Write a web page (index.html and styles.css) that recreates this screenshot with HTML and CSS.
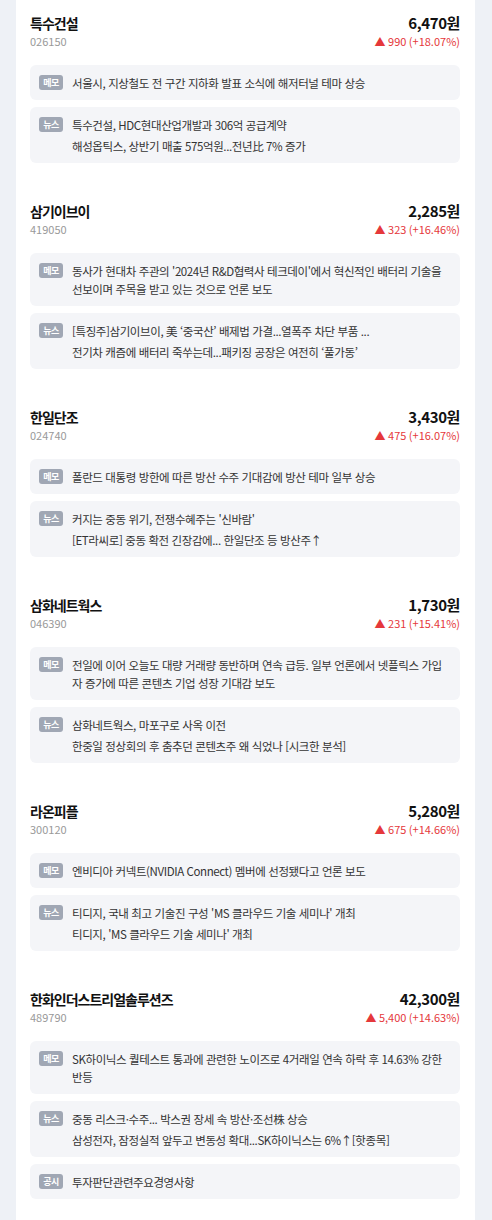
FILE: index.html
```html
<!DOCTYPE html>
<html lang="ko">
<head>
<meta charset="UTF-8">
<meta name="viewport" content="width=device-width, initial-scale=1.0">
<title>급등 종목</title>
<link rel="stylesheet" href="styles.css">
</head>
<body>
<div class="panel">
    <section class="stock">
        <div class="stock-head">
            <div>
                <h2 class="stock-name">특수건설</h2>
                <p class="stock-code">026150</p>
            </div>
            <div class="stock-price">
                <p class="price">6,470원</p>
                <p class="change">▲ 990 (+18.07%)</p>
            </div>
        </div>
        <ul class="notes">
            <li class="note">
                <span class="tag">메모</span>
                <div class="note-body"><p>서울시, 지상철도 전 구간 지하화 발표 소식에 해저터널 테마 상승</p></div>
            </li>
            <li class="note">
                <span class="tag">뉴스</span>
                <div class="note-body">
                    <p>특수건설, HDC현대산업개발과 306억 공급계약</p>
                    <p>해성옵틱스, 상반기 매출 575억원...전년比 7% 증가</p>
                </div>
            </li>
        </ul>
    </section>

    <section class="stock">
        <div class="stock-head">
            <div>
                <h2 class="stock-name">삼기이브이</h2>
                <p class="stock-code">419050</p>
            </div>
            <div class="stock-price">
                <p class="price">2,285원</p>
                <p class="change">▲ 323 (+16.46%)</p>
            </div>
        </div>
        <ul class="notes">
            <li class="note">
                <span class="tag">메모</span>
                <div class="note-body"><p>동사가 현대차 주관의 '2024년 R&amp;D협력사 테크데이'에서 혁신적인 배터리 기술을 선보이며 주목을 받고 있는 것으로 언론 보도</p></div>
            </li>
            <li class="note">
                <span class="tag">뉴스</span>
                <div class="note-body">
                    <p>[특징주]삼기이브이, 美 ‘중국산’ 배제법 가결...열폭주 차단 부품 ...</p>
                    <p>전기차 캐즘에 배터리 죽쑤는데...패키징 공장은 여전히 ‘풀가동’</p>
                </div>
            </li>
        </ul>
    </section>

    <section class="stock">
        <div class="stock-head">
            <div>
                <h2 class="stock-name">한일단조</h2>
                <p class="stock-code">024740</p>
            </div>
            <div class="stock-price">
                <p class="price">3,430원</p>
                <p class="change">▲ 475 (+16.07%)</p>
            </div>
        </div>
        <ul class="notes">
            <li class="note">
                <span class="tag">메모</span>
                <div class="note-body"><p>폴란드 대통령 방한에 따른 방산 수주 기대감에 방산 테마 일부 상승</p></div>
            </li>
            <li class="note">
                <span class="tag">뉴스</span>
                <div class="note-body">
                    <p>커지는 중동 위기, 전쟁수혜주는 '신바람'</p>
                    <p>[ET라씨로] 중동 확전 긴장감에... 한일단조 등 방산주↑</p>
                </div>
            </li>
        </ul>
    </section>

    <section class="stock">
        <div class="stock-head">
            <div>
                <h2 class="stock-name">삼화네트웍스</h2>
                <p class="stock-code">046390</p>
            </div>
            <div class="stock-price">
                <p class="price">1,730원</p>
                <p class="change">▲ 231 (+15.41%)</p>
            </div>
        </div>
        <ul class="notes">
            <li class="note">
                <span class="tag">메모</span>
                <div class="note-body"><p>전일에 이어 오늘도 대량 거래량 동반하며 연속 급등. 일부 언론에서 넷플릭스 가입자 증가에 따른 콘텐츠 기업 성장 기대감 보도</p></div>
            </li>
            <li class="note">
                <span class="tag">뉴스</span>
                <div class="note-body">
                    <p>삼화네트웍스, 마포구로 사옥 이전</p>
                    <p>한중일 정상회의 후 춤추던 콘텐츠주 왜 식었나 [시크한 분석]</p>
                </div>
            </li>
        </ul>
    </section>

    <section class="stock">
        <div class="stock-head">
            <div>
                <h2 class="stock-name">라온피플</h2>
                <p class="stock-code">300120</p>
            </div>
            <div class="stock-price">
                <p class="price">5,280원</p>
                <p class="change">▲ 675 (+14.66%)</p>
            </div>
        </div>
        <ul class="notes">
            <li class="note">
                <span class="tag">메모</span>
                <div class="note-body"><p>엔비디아 커넥트(NVIDIA Connect) 멤버에 선정됐다고 언론 보도</p></div>
            </li>
            <li class="note">
                <span class="tag">뉴스</span>
                <div class="note-body">
                    <p>티디지, 국내 최고 기술진 구성 'MS 클라우드 기술 세미나' 개최</p>
                    <p>티디지, 'MS 클라우드 기술 세미나' 개최</p>
                </div>
            </li>
        </ul>
    </section>

    <section class="stock">
        <div class="stock-head">
            <div>
                <h2 class="stock-name">한화인더스트리얼솔루션즈</h2>
                <p class="stock-code">489790</p>
            </div>
            <div class="stock-price">
                <p class="price">42,300원</p>
                <p class="change">▲ 5,400 (+14.63%)</p>
            </div>
        </div>
        <ul class="notes">
            <li class="note">
                <span class="tag">메모</span>
                <div class="note-body"><p>SK하이닉스 퀄테스트 통과에 관련한 노이즈로 4거래일 연속 하락 후 14.63% 강한 반등</p></div>
            </li>
            <li class="note">
                <span class="tag">뉴스</span>
                <div class="note-body">
                    <p>중동 리스크·수주... 박스권 장세 속 방산·조선株 상승</p>
                    <p>삼성전자, 잠정실적 앞두고 변동성 확대...SK하이닉스는 6%↑[핫종목]</p>
                </div>
            </li>
            <li class="note">
                <span class="tag">공시</span>
                <div class="note-body"><p>투자판단관련주요경영사항</p></div>
            </li>
        </ul>
    </section>
</div>
</body>
</html>
```

FILE: styles.css
```css
h2,
p,
ul {
    margin: 0;
    padding: 0;
}
body {
    margin: 0;
    background: #eef1f6;
    font-family: "Noto Sans CJK KR", "Noto Sans", sans-serif;
    color: #222;
}
.panel {
    margin: 0 17px 0 16px;
    background: #fff;
    min-height: 1220px;
}
.stock {
    padding: 13px 15px 25px 14px;
}
.stock-head {
    display: flex;
    justify-content: space-between;
    align-items: flex-start;
    margin-bottom: 16px;
}
.stock-name {
    font-size: 14px;
    line-height: 20px;
    font-weight: 700;
    letter-spacing: -1px;
    color: #111;
}
.stock-code {
    font-size: 11px;
    line-height: 16px;
    color: #999;
}
.stock-price {
    text-align: right;
}
.price {
    font-size: 15px;
    line-height: 20px;
    font-weight: 700;
    letter-spacing: -0.4px;
    color: #111;
}
.change {
    font-size: 11px;
    line-height: 16px;
    color: #e5383b;
}
.notes {
    list-style: none;
    display: flex;
    flex-direction: column;
    gap: 7px;
}
.note {
    display: flex;
    align-items: flex-start;
    gap: 9px;
    padding: 9px 12px 8px 9px;
    background: #f4f5f8;
    border-radius: 6px;
}
.tag {
    flex: none;
    margin-top: 1px;
    width: 24px;
    height: 15px;
    border-radius: 3px;
    background: #a0a7b4;
    color: #fff;
    font-size: 9px;
    line-height: 15px;
    font-weight: 700;
    text-align: center;
    letter-spacing: -0.5px;
}
.note-body {
    display: flex;
    flex-direction: column;
    gap: 3px;
    font-size: 11.5px;
    line-height: 18px;
    letter-spacing: -0.4px;
    word-break: break-all;
    color: #333;
}
```
